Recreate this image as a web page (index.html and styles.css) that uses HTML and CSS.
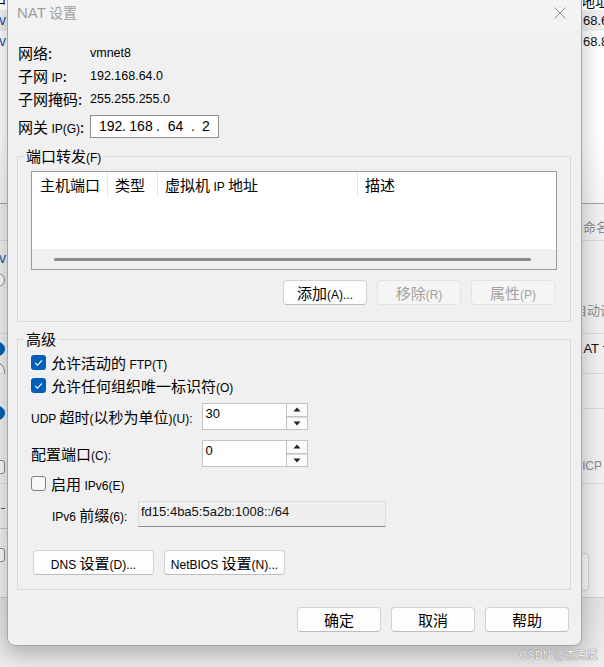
FILE: index.html
```html
<!DOCTYPE html>
<html lang="zh-CN">
<head>
<meta charset="utf-8">
<title>NAT 设置</title>
<link rel="stylesheet" href="styles.css">
</head>
<body>
<div class="desk">
  <div class="band b-a"><div class="l"><span class="sh-zh">中</span></div><div class="r"><span class="dt">地址</span></div></div>
  <div class="band b-b"><div class="l"><span class="v">v</span></div><div class="r"><span class="num">68.6</span></div></div>
  <div class="band b-c"><div class="l"><span class="v">v</span></div><div class="r"><span class="num">68.8</span></div></div>
  <div class="band b-d"></div>
  <div class="band b-e"><div class="l"></div><div class="r"><span class="gtxt e1">命名</span></div></div>
  <div class="band b-f"><div class="l"><span class="v f1">v</span><span class="rad f2"></span></div><div class="r"><span class="gtxt f3">自动调</span></div></div>
  <div class="band b-g"><div class="l"><span class="rad on g1"></span><span class="rad g2"></span></div><div class="r"><span class="btxt g3">NAT 设</span></div></div>
  <div class="band b-h"><div class="l"><span class="rad on h1"></span><span class="cb h2"></span></div><div class="r"><div class="rline"></div><span class="gtxt h3">DHCP 设</span></div></div>
  <div class="band b-i"><div class="l"><span class="dash"></span><span class="lline"></span><span class="cb i3"></span></div><div class="r rr"><span class="obtn o1"></span><span class="obtn o2"></span></div></div>
  <div class="band b-j"></div>
</div>

<div class="dialog">
  <div class="titlebar">
    <div class="title"><span class="tl">NAT</span> 设置</div>
    <svg class="close" width="12" height="12" viewBox="0 0 12 12"><path d="M0.5 0.5L11.5 11.5M11.5 0.5L0.5 11.5" stroke="#8f8f8f" stroke-width="1" fill="none"/></svg>
  </div>
  <div class="body">
    <div class="info">
      <div class="lbl">网络:</div><div class="val">vmnet8</div>
      <div class="lbl">子网 <span class="en">IP</span>:</div><div class="val">192.168.64.0</div>
      <div class="lbl">子网掩码:</div><div class="val">255.255.255.0</div>
    </div>
    <div class="gwrow">
      <div class="lbl">网关 <span class="en">IP(G)</span>:</div>
      <div class="ipbox"><span class="seg s1">192</span><span class="dot">.</span><span class="seg s2">168</span><span class="dot">.</span><span class="seg s3">64</span><span class="dot">.</span><span class="seg s4">2</span></div>
    </div>

    <fieldset class="group g1">
      <legend>端口转发<span class="en">(F)</span></legend>
      <div class="list">
        <div class="lhead">
          <div class="col c1">主机端口</div>
          <div class="col c2">类型</div>
          <div class="col c3">虚拟机 <span class="en">IP</span> 地址</div>
          <div class="col c4">描述</div>
        </div>
        <div class="lbody"></div>
        <div class="hscroll"><div class="thumb"></div></div>
      </div>
      <div class="btnrow">
        <button class="btn">添加<span class="en">(A)...</span></button>
        <button class="btn dis">移除<span class="en">(R)</span></button>
        <button class="btn dis">属性<span class="en">(P)</span></button>
      </div>
    </fieldset>

    <fieldset class="group g2">
      <legend>高级</legend>
      <div class="chk"><span class="box on"><svg width="15" height="15" viewBox="0 0 15 15"><path d="M4.2 7.9L6.5 10.1L11 5.4" fill="none" stroke="#fff" stroke-width="1.1"/></svg></span><span>允许活动的 <span class="en">FTP(T)</span></span></div>
      <div class="chk"><span class="box on"><svg width="15" height="15" viewBox="0 0 15 15"><path d="M4.2 7.9L6.5 10.1L11 5.4" fill="none" stroke="#fff" stroke-width="1.1"/></svg></span><span>允许任何组织唯一标识符<span class="en">(O)</span></span></div>
      <div class="frow udp">
        <div class="flbl"><span class="en">UDP </span>超时<span class="en">(</span>以秒为单位<span class="en">)(U):</span></div>
        <div class="spin">
          <div class="spinval">30</div>
          <div class="spinbtns">
            <div class="sb"><svg width="8" height="5" viewBox="0 0 8 5"><path d="M4 0.5L7.5 4.5H0.5Z" fill="#222"/></svg></div>
            <div class="sb"><svg width="8" height="5" viewBox="0 0 8 5"><path d="M0.5 0.5H7.5L4 4.5Z" fill="#222"/></svg></div>
          </div>
        </div>
      </div>
      <div class="frow port">
        <div class="flbl">配置端口<span class="en">(C):</span></div>
        <div class="spin">
          <div class="spinval">0</div>
          <div class="spinbtns">
            <div class="sb"><svg width="8" height="5" viewBox="0 0 8 5"><path d="M4 0.5L7.5 4.5H0.5Z" fill="#222"/></svg></div>
            <div class="sb"><svg width="8" height="5" viewBox="0 0 8 5"><path d="M0.5 0.5H7.5L4 4.5Z" fill="#222"/></svg></div>
          </div>
        </div>
      </div>
      <div class="chk c3row"><span class="box off"></span><span>启用 <span class="en">IPv6(E)</span></span></div>
      <div class="frow v6">
        <div class="v6lbl"><span class="en">IPv6 </span>前缀<span class="en">(6):</span></div>
        <div class="v6field">fd15:4ba5:5a2b:1008::/64</div>
      </div>
      <div class="btnrow left">
        <button class="btn wide"><span class="en">DNS </span>设置<span class="en">(D)...</span></button>
        <button class="btn wide"><span class="en">NetBIOS </span>设置<span class="en">(N)...</span></button>
      </div>
    </fieldset>

    <div class="btnrow bottom">
      <button class="btn">确定</button>
      <button class="btn">取消</button>
      <button class="btn">帮助</button>
    </div>
  </div>
</div>

<div class="watermark"><span class="wen">CSDN @</span>杰克尼</div>
</body>
</html>
```

FILE: styles.css
```css
* { box-sizing: border-box; }
html, body { margin: 0; padding: 0; }
body {
  width: 604px;
  height: 667px;
  overflow: hidden;
  position: relative;
  background: #f0f0f0;
  font-family: "Noto Sans CJK SC", "Liberation Sans", sans-serif;
  color: #000;
}
.en {
  font-family: "Liberation Sans", "Noto Sans CJK SC", sans-serif;
  font-size: 12px;
  line-height: 1;
}

/* ---------- background window ---------- */
.desk {
  height: 667px;
  display: flex;
  flex-direction: column;
  font-size: 13px;
}
.band { flex: none; display: flex; justify-content: space-between; overflow: hidden; }
.band .l { width: 7px; flex: none; display: flex; flex-direction: column; align-items: flex-start; }
.band .r { width: 21px; flex: none; display: flex; flex-direction: column; align-items: flex-start; white-space: nowrap; overflow: hidden; }
.b-a { height: 10px; background: #fff; }
.b-a .l, .b-a .r { font-size: 14px; line-height: 14px; margin-top: -6px; }
.sh-zh { margin-left: -8px; }
.dt { margin-left: -2px; }
.b-b { height: 21px; background: #efefef; }
.b-c { height: 22px; background: #fff; }
.b-b .l, .b-b .r, .b-c .l, .b-c .r { line-height: 21px; }
.v { color: #2155a8; font-family: "Liberation Sans", sans-serif; font-size: 14px; margin-left: -1px; line-height: 16px; }
.b-b .v, .b-c .v { line-height: 21px; }
.num { font-family: "Liberation Sans", sans-serif; font-size: 13px; color: #111; }
.b-d { height: 150px; background: linear-gradient(#fff 55%, #f5f5f5); }
.b-e { height: 37px; border-top: 1px solid #a3a3a3; background: #f0f0f0; }
.b-f { height: 93px; border-top: 1px solid #dadada; background: #f0f0f0; }
.b-g { height: 40px; border-top: 1px solid #dadada; background: #f0f0f0; }
.b-h { height: 110px; border-top: 1px solid #dadada; background: #f0f0f0; }
.b-i { height: 114px; border-top: 1px solid #dadada; background: #f0f0f0; }
.b-j { height: 70px; border-top: 1px solid #cdcdcd; background: linear-gradient(#e2e2e2, #ececec); }
.gtxt { color: #8c8c8c; font-size: 13px; line-height: 16px; }
.btxt { color: #111; font-size: 13px; line-height: 16px; font-family: "Liberation Sans", "Noto Sans CJK SC", sans-serif; }
.e1 { margin-top: 15px; }
.f1 { margin-top: 9px; }
.f2 { margin-top: 7px; }
.f3 { margin-top: 61px; margin-left: -9px; }
.g1 { margin-top: 7px; }
.g2 { margin-top: 8px; }
.g3 { margin-top: 7px; margin-left: -9px; }
.h1 { margin-top: 32px; }
.h2 { margin-top: 40px; }
.rline { width: 21px; height: 35px; border-bottom: 1px solid #dadada; }
.h3 { margin-top: 49px; margin-left: -15px; font-family: "Liberation Sans", "Noto Sans CJK SC", sans-serif; font-size: 12px; }
.rad { width: 14px; height: 14px; border-radius: 50%; border: 1px solid #8a8a8a; background: #fafafa; margin-left: -9px; flex: none; }
.rad.on { background: #005fb8; border-color: #005fb8; }
.cb { width: 14px; height: 14px; border-radius: 3px; border: 1px solid #8a8a8a; background: #fafafa; margin-left: -9px; flex: none; }
.dash { width: 4px; height: 1px; background: #555; margin-top: 24px; margin-left: 1px; }
.lline { width: 7px; height: 1px; background: #c4c4c4; margin-top: 19px; }
.i3 { margin-top: 19px; }
.rr { flex-direction: row; align-items: flex-start; }
.obtn { flex: none; height: 38px; margin-top: 69px; border: 1px solid #cfcfcf; border-radius: 4px; background: #fbfbfb; }
.o1 { width: 26px; margin-left: -20px; }
.o2 { width: 26px; margin-left: 8px; }

/* ---------- dialog ---------- */
.dialog {
  position: absolute;
  left: 7px;
  top: -1px;
  width: 575px;
  height: 647px;
  border: 1px solid #a6a6a6;
  border-radius: 0 0 8px 8px;
  background: #f0f0f0;
  box-shadow: 0 8px 22px rgba(0, 0, 0, 0.26);
  overflow: hidden;
}
.titlebar {
  height: 31px;
  background: #f3f3f3;
  display: flex;
  justify-content: space-between;
  align-items: flex-start;
}
.title {
  padding-left: 9px;
  line-height: 24px;
  font-size: 14px;
  color: #9e9e9e;
}
.tl { font-family: "Liberation Sans", sans-serif; font-size: 15px; }
.close { margin-top: 7px; margin-right: 15px; }

.body {
  padding: 10px 10px 13px 9px;
  font-size: 15px;
}
.info {
  display: grid;
  grid-template-columns: 72px auto;
  grid-auto-rows: 23px;
  align-items: center;
  margin-left: 1px;
}
.lbl { line-height: 23px; white-space: nowrap; }
.val { font-family: "Liberation Sans", sans-serif; font-size: 12.5px; }
.gwrow { display: flex; align-items: center; margin-top: 5px; margin-left: 1px; }
.gwrow .lbl { width: 72px; }
.ipbox {
  width: 129px;
  height: 23px;
  border: 1px solid #8e8e8e;
  background: #fff;
  display: flex;
  align-items: center;
  padding-left: 8px;
  font-family: "Liberation Sans", sans-serif;
  font-size: 14px;
  line-height: 21px;
}
.seg { text-align: center; }
.s1 { width: 23px; }
.s2 { width: 30px; }
.s3 { width: 31px; }
.s4 { width: 22px; }
.dot { width: 4px; text-align: center; }

.group {
  margin: 0;
  min-width: 0;
  border: 1px solid #dadada;
  padding: 5px 13px 16px 13px;
}
.group legend {
  padding: 0 2px;
  margin-left: -7px;
  line-height: 20px;
  font-size: 15px;
}
.g1 { margin-top: 8px; }
.g2 { margin-top: 7px; padding-top: 2px; padding-bottom: 14px; }

.list {
  height: 99px;
  border: 1px solid #9b9b9b;
  background: #fff;
  display: flex;
  flex-direction: column;
}
.lhead { height: 25px; display: flex; flex: none; }
.col {
  line-height: 25px;
  padding-left: 7px;
  border-right: 1px solid #e6e6e6;
  white-space: nowrap;
}
.c1 { width: 76px; padding-left: 8px; }
.c2 { width: 50px; }
.c3 { width: 200px; }
.c4 { flex: 1; border-right: 0; }
.lbody { flex: 1; }
.hscroll {
  height: 20px;
  flex: none;
  background: #f0f0f0;
  display: flex;
  align-items: center;
  padding: 0 25px 0 22px;
}
.thumb { flex: 1; height: 3px; border-radius: 2px; background: #8a8a8a; }

.btnrow {
  display: flex;
  justify-content: flex-end;
  gap: 10px;
  margin-top: 10px;
  margin-right: 2px;
}
.btn {
  width: 84px;
  height: 25px;
  padding: 0;
  margin: 0;
  border: 1px solid #d2d2d2;
  border-bottom-color: #bdbdbd;
  border-radius: 4px;
  background: #fdfdfd;
  font-family: "Noto Sans CJK SC", "Liberation Sans", sans-serif;
  font-size: 15px;
  line-height: 22px;
  color: #000;
  text-align: center;
  white-space: nowrap;
}
.btn.dis {
  background: #f5f5f5;
  border-color: #e3e3e3;
  color: #a2a2a2;
}
.btnrow.left { justify-content: flex-start; margin-top: 23px; margin-left: 2px; margin-right: 0; }
.btn.wide { width: 121px; }
.btnrow.bottom { margin-top: 17px; }

.chk {
  display: flex;
  align-items: center;
  gap: 5px;
  height: 23px;
  white-space: nowrap;
}
.box {
  width: 15px;
  height: 15px;
  border-radius: 3px;
  flex: none;
  display: block;
}
.box svg { display: block; }
.box.on { background: #005fb8; }
.box.off { border: 1px solid #7f7f7f; background: #f8f8f8; }
.c3row { margin-top: 5px; }

.frow { display: flex; align-items: center; }
.udp { margin-top: 6px; }
.port { margin-top: 10px; }
.flbl { width: 170.5px; white-space: nowrap; }
.spin { display: flex; width: 106px; height: 27px; }
.spinval {
  flex: 1;
  background: #fff;
  border: 1px solid #c3c3c3;
  font-family: "Liberation Sans", sans-serif;
  font-size: 13px;
  line-height: 18px;
  padding: 1px 0 0 3px;
}
.spinbtns { width: 21px; display: flex; flex-direction: column; flex: none; }
.sb {
  flex: 1;
  border: 1px solid #c3c3c3;
  border-left: 0;
  background: #fbfbfb;
  display: flex;
  align-items: center;
  justify-content: center;
}
.sb + .sb { border-top: 1px solid #dcdcdc; }
.sb svg { display: block; }

.v6 { margin-top: 6px; }
.v6lbl { width: 107px; padding-left: 21px; white-space: nowrap; }
.v6field {
  width: 248px;
  height: 26px;
  background: #efefef;
  border: 1px solid #dcdcdc;
  border-bottom-color: #8c8c8c;
  font-family: "Liberation Sans", sans-serif;
  font-size: 13px;
  line-height: 18px;
  padding: 1px 0 0 2px;
  color: #111;
}

.watermark {
  position: absolute;
  right: 6px;
  bottom: 5px;
  font-size: 11px;
  line-height: 14px;
  color: #f6f6f6;
  text-shadow: 0 0 1px #6f6f6f, 0 0 1px #8a8a8a;
  white-space: nowrap;
}
.wen { font-family: "Liberation Sans", sans-serif; }
```
